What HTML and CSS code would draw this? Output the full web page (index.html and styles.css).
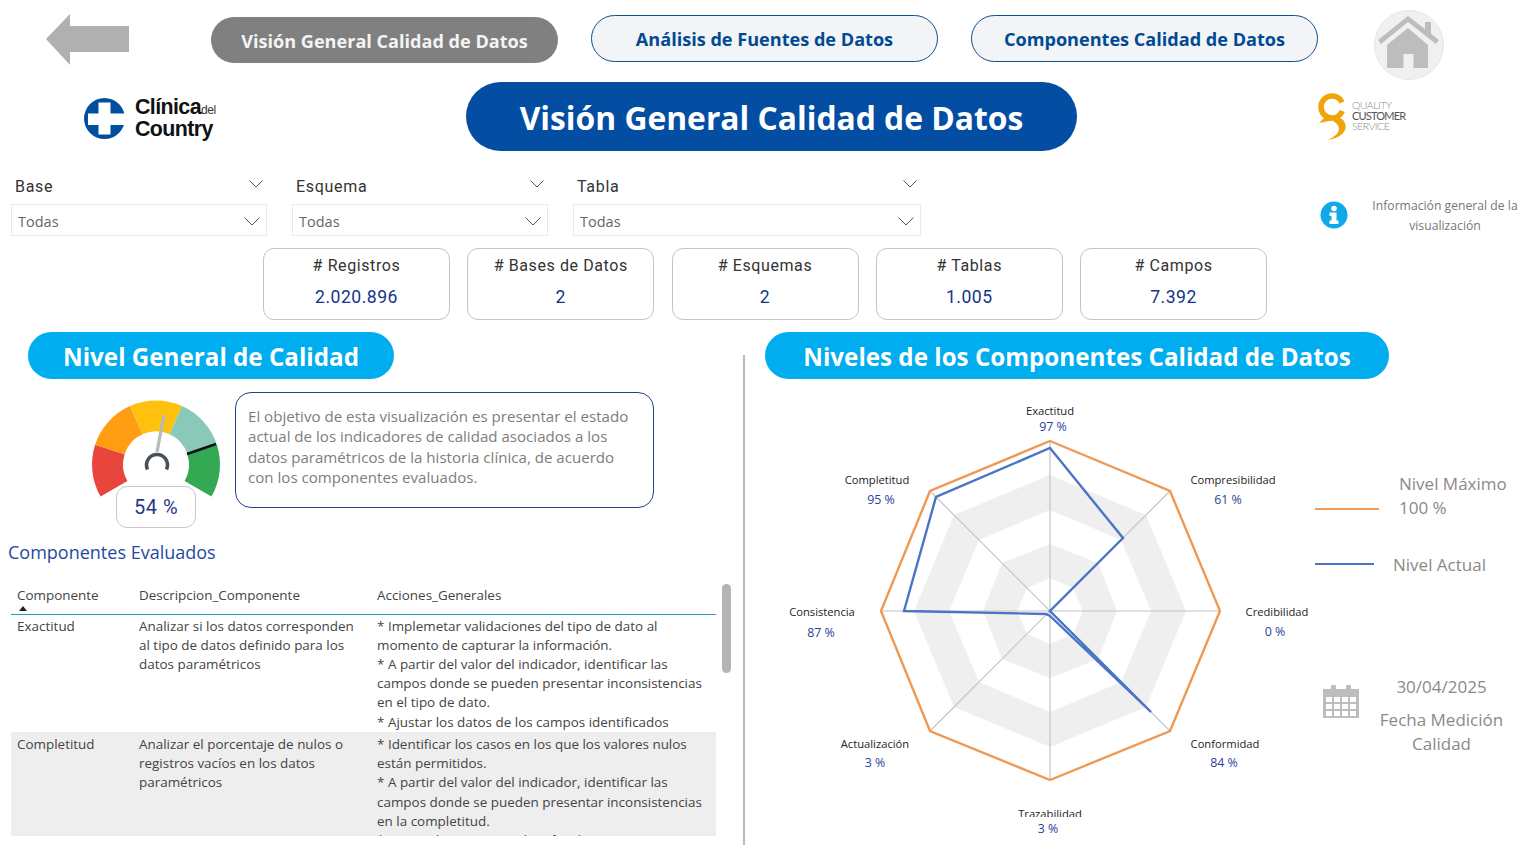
FILE: index.html
```html
<!DOCTYPE html>
<html lang="es">
<head>
<meta charset="utf-8">
<title>Visión General Calidad de Datos</title>
<link rel="stylesheet" href="styles.css">
</head>
<body>
<div class="page">
  <header class="topbar">
    <svg class="back" viewBox="0 0 84 52" aria-hidden="true"><path d="M0 25 L24 0 V12 H83 V38 H24 V51 Z" fill="#b0b0b0"/></svg>
    <a class="nav nav-active">Visión General Calidad de Datos</a>
    <a class="nav nav-2">Análisis de Fuentes de Datos</a>
    <a class="nav nav-3">Componentes Calidad de Datos</a>
    <div class="home">
      <svg viewBox="0 0 70 70" width="70" height="70" aria-hidden="true">
        <path d="M51 12 h6 v12 h-6z" fill="#bdbdbd"/>
        <path d="M4 30 L34 6 L65 30 L62 34 L34 12 L7 34 Z" fill="#bdbdbd"/>
        <path d="M13 35 L34 18 L54 35 V58 H39.5 V44 H29.5 V58 H13 Z" fill="#bdbdbd"/>
      </svg>
    </div>
  </header>

  <section class="titlerow">
    <div class="logo-cc">
      <svg viewBox="0 0 42 41" width="42" height="41" aria-hidden="true">
        <circle cx="20.5" cy="20.5" r="20.5" fill="#004f9f"/>
        <path d="M14.5 4.5 H26.5 V15.5 H42 V27 H26.5 V36.5 H14.5 V27 H4 V15.5 H14.5 Z" fill="#fff"/>
      </svg>
      <div class="logo-cc-text"><div>Clínica<span class="del">del</span></div><div>Country</div></div>
    </div>
    <h1 class="title">Visión General Calidad de Datos</h1>
    <div class="logo-qcs">
      <svg viewBox="0 0 32 48" width="32" height="48" aria-hidden="true">
        <circle cx="14" cy="15" r="11" fill="none" stroke="#f0a30a" stroke-width="5.5" stroke-dasharray="60 9.1" stroke-dashoffset="-4"/>
        <path d="M8 24 L1 31 L16 28 Z" fill="#f0a30a"/>
        <path d="M19 25 C31 27 33 45 9 48 C22 43 25 35 15 29 Z" fill="#f0a30a"/>
      </svg>
      <div class="logo-qcs-text"><div>QUALITY</div><div class="strong">CUSTOMER</div><div>SERVICE</div></div>
    </div>
  </section>

  <section class="filters">
    <div class="slicer">
      <div class="slicer-head"><span>Base</span><svg class="chev-s" viewBox="0 0 14 8"><path d="M0.5 0.5 L7 7 L13.5 0.5"/></svg></div>
      <div class="slicer-box"><span>Todas</span><svg class="chev" viewBox="0 0 16 9"><path d="M0.5 0.5 L8 8 L15.5 0.5"/></svg></div>
    </div>
    <div class="slicer">
      <div class="slicer-head"><span>Esquema</span><svg class="chev-s" viewBox="0 0 14 8"><path d="M0.5 0.5 L7 7 L13.5 0.5"/></svg></div>
      <div class="slicer-box"><span>Todas</span><svg class="chev" viewBox="0 0 16 9"><path d="M0.5 0.5 L8 8 L15.5 0.5"/></svg></div>
    </div>
    <div class="slicer slicer-wide">
      <div class="slicer-head"><span>Tabla</span><svg class="chev-s" viewBox="0 0 14 8"><path d="M0.5 0.5 L7 7 L13.5 0.5"/></svg></div>
      <div class="slicer-box"><span>Todas</span><svg class="chev" viewBox="0 0 16 9"><path d="M0.5 0.5 L8 8 L15.5 0.5"/></svg></div>
    </div>
    <div class="info">
      <svg viewBox="0 0 28 28" width="28" height="28" aria-hidden="true">
        <circle cx="14" cy="14" r="13.5" fill="#0fa9ea"/>
        <circle cx="14" cy="7.5" r="2.8" fill="#fff"/>
        <path d="M9.5 11.5 H16.5 V19.5 H18.5 V23 H9.5 V19.5 H11.5 V15 H9.5 Z" fill="#fff"/>
      </svg>
      <p class="info-text">Información general de la<br>visualización</p>
    </div>
  </section>

  <section class="kpis">
    <div class="kpi"><div class="kpi-label"># Registros</div><div class="kpi-value">2.020.896</div></div>
    <div class="kpi"><div class="kpi-label"># Bases de Datos</div><div class="kpi-value">2</div></div>
    <div class="kpi"><div class="kpi-label"># Esquemas</div><div class="kpi-value">2</div></div>
    <div class="kpi"><div class="kpi-label"># Tablas</div><div class="kpi-value">1.005</div></div>
    <div class="kpi"><div class="kpi-label"># Campos</div><div class="kpi-value">7.392</div></div>
  </section>

  <main class="main">
    <section class="left">
      <h2 class="pill pill-left">Nivel General de Calidad</h2>
      <div class="summary">
        <div class="gauge">
          <svg viewBox="0 0 132 100" width="132" height="100" aria-hidden="true">
            <g class="gauge-arcs" fill="none" stroke-width="31">
              <circle cx="66" cy="66.5" r="48.5" pathLength="360" stroke="#e8453c" stroke-dasharray="48 312" transform="rotate(150 66 66.5)"/>
              <circle cx="66" cy="66.5" r="48.5" pathLength="360" stroke="#ff9e12" stroke-dasharray="48 312" transform="rotate(198 66 66.5)"/>
              <circle cx="66" cy="66.5" r="48.5" pathLength="360" stroke="#ffc10e" stroke-dasharray="48 312" transform="rotate(246 66 66.5)"/>
              <circle cx="66" cy="66.5" r="48.5" pathLength="360" stroke="#8ac8ba" stroke-dasharray="48 312" transform="rotate(294 66 66.5)"/>
              <circle cx="66" cy="66.5" r="48.5" pathLength="360" stroke="#34a853" stroke-dasharray="48 312" transform="rotate(342 66 66.5)"/>
            </g>
            <path d="M97 56 L126 46" stroke="#111" stroke-width="2.5"/>
            <path d="M67 54 L74 17" stroke="#b9b9b9" stroke-width="3.2"/>
            <path d="M57.5 71.5 A10.5 10.5 0 1 1 76.5 71.5" fill="none" stroke="#46535a" stroke-width="3.6"/>
          </svg>
          <div class="gauge-value">54 %</div>
        </div>
        <p class="note">El objetivo de esta visualización es presentar el estado<br>actual de los indicadores de calidad asociados a los<br>datos paramétricos de la historia clínica, de acuerdo<br>con los componentes evaluados.</p>
      </div>
      <h3 class="subhead">Componentes Evaluados</h3>
      <div class="table-area">
        <div class="table-clip">
          <table class="grid">
            <colgroup><col class="c1"><col class="c2"><col class="c3"></colgroup>
            <thead>
              <tr><th class="sorted">Componente</th><th>Descripcion_Componente</th><th>Acciones_Generales</th></tr>
            </thead>
            <tbody>
              <tr>
                <td>Exactitud</td>
                <td>Analizar si los datos corresponden<br>al tipo de datos definido para los<br>datos paramétricos</td>
                <td>* Implemetar validaciones del tipo de dato al<br>momento de capturar la información.<br>* A partir del valor del indicador, identificar las<br>campos donde se pueden presentar inconsistencias<br>en el tipo de dato.<br>* Ajustar los datos de los campos identificados</td>
              </tr>
              <tr class="alt">
                <td>Completitud</td>
                <td>Analizar el porcentaje de nulos o<br>registros vacíos en los datos<br>paramétricos</td>
                <td>* Identificar los casos en los que los valores nulos<br>están permitidos.<br>* A partir del valor del indicador, identificar las<br>campos donde se pueden presentar inconsistencias<br>en la completitud.<br>* Ajustar los registros identificados</td>
              </tr>
            </tbody>
          </table>
        </div>
        <div class="scroll-thumb"></div>
      </div>
    </section>

    <div class="divider"></div>

    <section class="right">
      <h2 class="pill pill-right">Niveles de los Componentes Calidad de Datos</h2>
      <div class="right-body">
        <svg class="radar" viewBox="780 395 540 445" width="540" height="445" aria-label="Radar">
          <defs>
            <clipPath id="clip-traz"><rect x="780" y="395" width="540" height="422"/></clipPath>
          </defs>
          <path fill="#efeff0" fill-rule="evenodd" d="M1050 475 L1146 515 L1186 611 L1146 707 L1050 747 L954 707 L914 611 L954 515 Z M1050 510 L979 540 L949 611 L979 682 L1050 712 L1121 682 L1151 611 L1121 540 Z"/>
          <path fill="#efeff0" fill-rule="evenodd" d="M1050 544 L1098 563 L1117 611 L1098 659 L1050 678 L1002 659 L983 611 L1002 563 Z M1050 578 L1027 588 L1017 611 L1027 634 L1050 644 L1073 634 L1083 611 L1073 588 Z"/>
          <path d="M1050 441 V781 M881 611 H1220 M930 491 L1170 731 M1170 491 L930 731" stroke="#c4c4c4" stroke-width="1.2" fill="none"/>
          <path d="M1050 441 L1170 491 L1220 611 L1170 731 L1050 780 L930 731 L881 611 L930 491 Z" fill="none" stroke="#ee9a55" stroke-width="2.4"/>
          <path d="M1050 448 L1123 538 L1050 611 L1151 712 L1050 616 L1046 614 L904 611 L936 497 Z" fill="none" stroke="#4a75c4" stroke-width="2.4" stroke-linejoin="miter"/>
          <g class="r-name">
            <text x="1050" y="415">Exactitud</text>
            <text x="877" y="484">Completitud</text>
            <text x="1233" y="484">Compresibilidad</text>
            <text x="822" y="616">Consistencia</text>
            <text x="1277" y="616">Credibilidad</text>
            <text x="875" y="748">Actualización</text>
            <text x="1225" y="748">Conformidad</text>
            <text x="1050" y="818" clip-path="url(#clip-traz)">Trazabilidad</text>
          </g>
          <g class="r-val">
            <text x="1053" y="431">97 %</text>
            <text x="881" y="504">95 %</text>
            <text x="1228" y="504">61 %</text>
            <text x="821" y="637">87 %</text>
            <text x="1275" y="636">0 %</text>
            <text x="875" y="767">3 %</text>
            <text x="1224" y="767">84 %</text>
            <text x="1048" y="833">3 %</text>
          </g>
        </svg>
        <aside class="side">
          <div class="legend-1">
            <span class="swatch swatch-o"></span>
            <div class="legend-text">Nivel Máximo<br>100 %</div>
          </div>
          <div class="legend-2">
            <span class="swatch swatch-b"></span>
            <div class="legend-text">Nivel Actual</div>
          </div>
          <div class="measure">
            <svg viewBox="0 0 36 34" width="36" height="34" aria-hidden="true">
              <path fill="#bdbdbd" fill-rule="evenodd" d="M0 4 H8 V2 a2.5 2.5 0 0 1 5 0 V4 H23 V2 a2.5 2.5 0 0 1 5 0 V4 H36 V33 H0 Z M3 12 V17 H9 V12 Z M11 12 V17 H17 V12 Z M19 12 V17 H25 V12 Z M27 12 V17 H33 V12 Z M3 19 V24 H9 V19 Z M11 19 V24 H17 V19 Z M19 19 V24 H25 V19 Z M27 19 V24 H33 V19 Z M3 26 V31 H9 V26 Z M11 26 V31 H17 V26 Z M19 26 V31 H25 V26 Z M27 26 V31 H33 V26 Z"/>
            </svg>
            <div class="measure-text">
              <div class="measure-date">30/04/2025</div>
              <div>Fecha Medición<br>Calidad</div>
            </div>
          </div>
        </aside>
      </div>
    </section>
  </main>
</div>
</body>
</html>
```

FILE: styles.css
```css
* { box-sizing: border-box; }
html, body { margin: 0; padding: 0; background: #fff; }
body { font-family: "Open Sans", "Liberation Sans", sans-serif; color: #333; }
.page { width: 1528px; height: 851px; overflow: hidden; }

/* top navigation */
.topbar { display: flex; align-items: flex-start; height: 82px; padding-left: 46px; }
.back { width: 84px; height: 52px; margin-top: 14px; margin-right: 81px; }
.nav { display: flex; align-items: center; justify-content: center; width: 347px; font-weight: 700; font-size: 18.1px; white-space: nowrap; }
.nav-active { height: 46px; margin-top: 17px; padding-top: 1px; background: #808080; color: #f4f4f4; border-radius: 23px; margin-right: 33px; }
.nav-2, .nav-3 { height: 47px; margin-top: 15px; background: #f3f4f6; color: #004b93; border: 1.5px solid #0d4f8f; border-radius: 24px; margin-right: 33px; }
.nav-3 { margin-right: 56px; }
.home { width: 70px; height: 70px; margin-top: 10px; border-radius: 50%; background: #f0f0f0; border: 1px solid #e6e6e6; }
.home svg { display: block; margin: -1px; }

/* title row */
.titlerow { display: flex; align-items: flex-start; height: 93px; padding-left: 84px; }
.logo-cc { display: flex; align-items: center; gap: 9px; width: 382px; margin-top: 16px; }
.logo-cc-text { font-family: "Liberation Sans", sans-serif; font-weight: 700; font-size: 21.4px; line-height: 19px; color: #111; letter-spacing: -0.6px; }
.del { font-weight: 400; font-size: 12px; letter-spacing: -0.4px; color: #333; }
.title { display: flex; align-items: center; justify-content: center; width: 611px; height: 69px; margin: 0 241px 0 0; padding-top: 2px; background: #034ea2; color: #fff; border-radius: 35px; font-size: 31.8px; font-weight: 700; white-space: nowrap; }
.logo-qcs { display: flex; align-items: center; gap: 2px; margin-top: 10px; }
.logo-qcs-text { font-family: "Lato", sans-serif; font-weight: 300; font-size: 10.5px; line-height: 10.5px; color: #8a8a8a; letter-spacing: -0.5px; }
.logo-qcs-text .strong { font-weight: 400; font-size: 11px; color: #555; letter-spacing: -0.8px; }

/* slicers */
.filters { display: flex; align-items: flex-start; height: 61px; padding-left: 11px; gap: 25px; }
.slicer { width: 256px; }
.slicer-wide { width: 348px; }
.slicer-head { display: flex; align-items: center; justify-content: space-between; height: 29px; padding: 0 4px 6px 4px; font-family: "Roboto", sans-serif; font-size: 16px; letter-spacing: 0.7px; color: #333; }
.slicer-head svg { margin-top: -6px; }
.slicer-box { display: flex; align-items: center; justify-content: space-between; height: 32px; padding: 2px 6px 0 6px; border: 1px solid #eaeaea; font-size: 14.5px; color: #666; }
.chev, .chev-s { fill: none; stroke: #555; stroke-width: 1; }
.chev { width: 16px; height: 9px; }
.chev-s { width: 14px; height: 8px; }
.info { display: flex; align-items: flex-start; gap: 22px; margin-left: 374px; margin-top: 26px; }
.info-text { width: 150px; margin: -5px 0 0 0; text-align: center; font-size: 12.2px; line-height: 20px; color: #777; white-space: nowrap; }

/* KPI cards */
.kpis { display: flex; gap: 17.25px; height: 72px; margin-top: 12px; padding-left: 263px; }
.kpi { width: 187px; border: 1px solid #c4c4c4; border-radius: 11px; text-align: center; font-family: "Roboto", sans-serif; }
.kpi-label { margin-top: 7px; font-size: 16px; line-height: 20px; letter-spacing: 0.6px; color: #333; }
.kpi-value { margin-top: 10px; font-size: 17.6px; line-height: 22px; letter-spacing: 0.5px; color: #12358c; }

/* main */
.main { display: grid; grid-template-columns: 743px 2px 1fr; height: 519px; margin-top: 12px; }
.divider { margin-top: 23px; height: 490px; background: #b9b9b9; }
.pill { display: flex; align-items: center; justify-content: center; height: 47px; margin: 0; padding-top: 1px; background: #00adef; color: #fff; font-weight: 700; font-size: 24.2px; border-radius: 24px; white-space: nowrap; }
.pill-left { width: 366px; margin-left: 28px; }
.pill-right { width: 624px; margin-left: 20px; }

/* left column */
.summary { display: flex; align-items: flex-start; height: 136px; margin-top: 13px; padding-left: 90px; }
.gauge { position: relative; width: 145px; height: 136px; padding-top: 6px; }
.gauge svg { display: block; }
.gauge-value { position: absolute; left: 26px; top: 94px; width: 80px; height: 42px; display: flex; align-items: center; justify-content: center; background: #fff; border: 1px solid #c9c9c9; border-radius: 11px; font-family: "Roboto", sans-serif; font-size: 20px; letter-spacing: 0.5px; color: #1f3a8a; }
.note { width: 419px; height: 116px; margin: 0; padding: 13px 12px; border: 1px solid #24408e; border-radius: 16px; font-size: 15.1px; line-height: 20.4px; color: #7d7d7d; white-space: nowrap; }
.subhead { margin: 11px 0 0 8px; height: 27px; font-weight: 400; font-size: 18px; line-height: 27px; color: #1f4aa0; }
.table-area { display: flex; gap: 6px; margin: 19px 0 0 11px; align-items: flex-start; }
.table-clip { width: 705px; height: 251px; overflow: hidden; }
.grid { width: 705px; table-layout: fixed; border-collapse: collapse; font-size: 13.45px; line-height: 19.2px; color: #444; }
.c1 { width: 122px; } .c2 { width: 238px; } .c3 { width: 345px; }
.grid th { position: relative; height: 29px; padding: 0 6px 8px; text-align: left; font-weight: 400; border-bottom: 1px solid #2a9dc4; color: #444; white-space: nowrap; }
.sorted::after { content: ""; position: absolute; left: 8px; bottom: 3px; border: 4px solid transparent; border-top: 0; border-bottom: 5px solid #222; }
.grid td { padding: 2px 6px 0; vertical-align: top; white-space: nowrap; }
.grid tr:first-child td { height: 118px; }
.alt td { background: #eeeeee; padding-top: 3px; }
.scroll-thumb { width: 9px; height: 89px; margin-top: -1px; border-radius: 5px; background: #b4b4b4; }

/* right column */
.right-body { display: flex; align-items: flex-start; margin-top: 16px; }
.radar { display: block; margin-left: 35px; flex: none; }
.r-name text { font-size: 11.2px; fill: #222; text-anchor: middle; }
.r-val text { font-size: 12.4px; fill: #2c3f9c; text-anchor: middle; }
.side { width: 208px; color: #8a8a8a; font-size: 17px; line-height: 24px; }
.legend-1 { display: flex; gap: 20px; align-items: flex-end; margin-top: 77px; margin-left: -5px; }
.legend-2 { display: flex; gap: 19px; align-items: center; margin-top: 33px; margin-left: -5px; }
.legend-text { white-space: nowrap; }
.swatch { display: block; width: 64px; height: 2px; flex: none; }
.swatch-o { background: #ee9a55; margin-bottom: 10px; }
.swatch-b { background: #4a75c4; width: 59px; margin-top: -3px; }
.measure { display: flex; align-items: flex-start; margin-top: 98px; }
.measure svg { flex: none; margin-top: 10px; margin-left: 3px; }
.measure-text { width: 165px; margin-left: 0; text-align: center; white-space: nowrap; }
.measure-date { margin-bottom: 9px; }
```
